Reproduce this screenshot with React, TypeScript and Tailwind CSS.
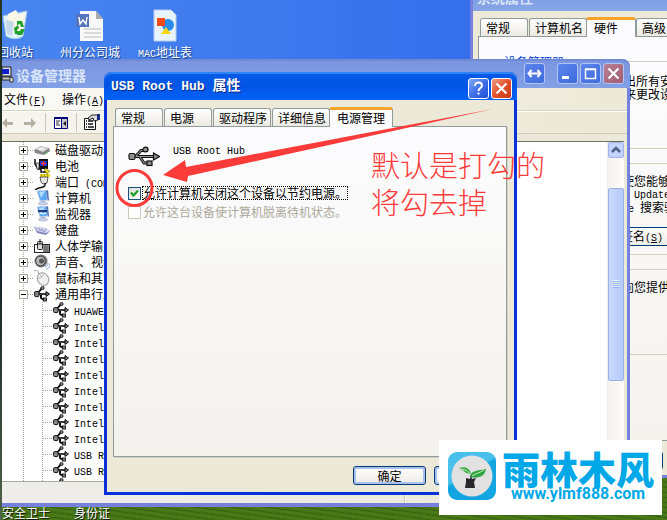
import { useState } from "react";
import type { ReactNode } from "react";
import clsx from "clsx";

type TabsProps = {
  items: string[];
  active: string;
};

type DeviceKind =
  | "disk"
  | "battery"
  | "port"
  | "computer"
  | "monitor"
  | "keyboard"
  | "hid"
  | "sound"
  | "mouse"
  | "usb";

const devices: { kind: DeviceKind; label: string }[] = [
  { kind: "disk", label: "磁盘驱动器" },
  { kind: "battery", label: "电池" },
  { kind: "port", label: "端口" },
  { kind: "computer", label: "计算机" },
  { kind: "monitor", label: "监视器" },
  { kind: "keyboard", label: "键盘" },
  { kind: "hid", label: "人体学输入设备" },
  { kind: "sound", label: "声音、视频" },
  { kind: "mouse", label: "鼠标和其它" },
  { kind: "usb", label: "通用串行总线" },
];

const usbDevices = [
  "HUAWEI",
  "Intel(R)",
  "Intel(R)",
  "Intel(R)",
  "Intel(R)",
  "Intel(R)",
  "Intel(R)",
  "Intel(R)",
  "Intel(R)",
  "USB Root",
  "USB Root",
  "USB Root",
];

// latin letters are half the width of a chinese one: 10px mono next to 12px hanzi
const Latin = ({ children }: { children: ReactNode }) => (
  <span className="font-['Liberation_Mono',monospace] text-[10px] leading-none">
    {children}
  </span>
);

const UsbLarge = () => (
  <svg width="32" height="26" viewBox="0 0 32 26">
    <g fill="none" stroke="#111" strokeWidth="3">
      <path d="M6 13.5h20M8 13l5-5.500h4M12 14l4 6h4" />
    </g>
    <g fill="none" stroke="#999" strokeWidth="1.1">
      <path d="M6 13.5h20M8 13l5-5.500h4M12 14l4 6h4" />
    </g>
    <g fill="#8f8f8f" stroke="#111" strokeWidth="1.2">
      <rect x="1" y="10.500" width="6" height="6" rx="1.5" />
      <path d="M25.500 10l6 3.500-6 3.500z" />
      <ellipse cx="17.500" cy="6.500" rx="2.600" ry="2.300" />
      <rect x="19" y="18" width="5" height="4.500" />
    </g>
  </svg>
);

const DeviceIcon = ({ kind }: { kind: DeviceKind }) => (
  <svg width="16" height="16" viewBox="0 0 16 16" className="shrink-0">
    {kind === "disk" && (
      <>
        <path d="M0 8l6-4 9 2 1 3-6 4-9-2z" fill="#858585" />
        <path d="M1 7l5-3 9 2-6 4z" fill="#d8d8d8" />
        <path d="M4 7l3-1 4 1-3 1z" fill="#f8f8f8" />
        <path d="M11 11h2" stroke="#39b54a" />
      </>
    )}
    {kind === "battery" && (
      <>
        <path d="M1 1v5l3 5h3v3h6" fill="none" stroke="#111" strokeWidth="1.5" />
        <rect x="5" y="1" width="9" height="10" fill="#111" />
        <rect x="6" y="3" width="7" height="5" fill="#1230e0" />
        <path d="M9.500 3v5M7 5.500h5" stroke="#f33" strokeWidth="1.300" />
        <path d="M2 5h3v6H3z" fill="#ddd" stroke="#111" strokeWidth=".6" />
        <path d="M10 12l2-2 1 2 3 1-3 3-1-2z" fill="#f3dc20" stroke="#665800" strokeWidth=".5" />
      </>
    )}
    {kind === "port" && (
      <>
        <path d="M6 0h10v3H6z" fill="#f1dc24" />
        <path d="M7 1h1m2 0h1m2 0h1" stroke="#665800" />
        <path d="M6 3h8l-1 6-4 1-2-2z" fill="#e6e6e6" stroke="#333" strokeWidth=".8" />
        <path d="M11 9c1 6-5 3-10 7" fill="none" stroke="#111" strokeWidth="1.400" />
      </>
    )}
    {(kind === "computer" || kind === "monitor") && (
      <>
        <path d="M3 1l9-1 2 10-8 1z" fill="#5aa9f5" stroke="#c3cfe4" />
        <path d="M5 2l6-1-4 7z" fill="#b4dcff" />
        <path d="M12 1l2-1 1 10-1 1z" fill="#5271b5" />
        <path d="M7 11h4v2H7z" fill="#8ca0c8" />
        <ellipse cx="9" cy="13.500" rx="5" ry="2" fill="#c2cbe1" />
        {kind === "monitor" && (
          <>
            <path d="M4 4h9v2H4z" fill="#213b7a" />
            <path d="M6 7l3 1 3-1" stroke="#fff" fill="none" />
          </>
        )}
      </>
    )}
    {kind === "keyboard" && (
      <>
        <path d="M0 5l11 1 5 3-4 4-9-2z" fill="#8585b8" />
        <path d="M0 4l10 2 6 3-4 2-9-2z" fill="#dedef4" />
        <path d="M2 6l10 3M4 8l8 2M6 5l-2 3m5-2L7 9m5-2l-2 3" stroke="#9a9acb" strokeWidth=".7" />
      </>
    )}
    {kind === "hid" && (
      <>
        <rect x=".5" y="6.500" width="15" height="8" fill="#fff" stroke="#222" />
        <rect x="9" y="7" width="6" height="7" fill="#aaa" />
        <path d="M9 9h6m-6 2h6m-6 2h6M11 7v7m2-7v7" stroke="#444" strokeWidth=".6" />
        <rect x="3.500" y="3.500" width="5" height="8" rx="1" fill="#ddd" stroke="#222" />
        <path d="M6 1v5M4 6h4" stroke="#222" />
      </>
    )}
    {kind === "sound" && (
      <>
        <circle cx="7" cy="7" r="6.500" fill="#777" />
        <circle cx="6.500" cy="7" r="4.800" fill="#b9b9b9" stroke="#444" />
        <circle cx="7.500" cy="7" r="2.500" fill="#555" />
        <path d="M11 13c2 0 3-2 3-4M12 15.500c3-1 4-3 4-6" fill="none" stroke="#8fa2e2" />
      </>
    )}
    {kind === "mouse" && (
      <>
        <path d="M0 1c4-2 4 1 5 3" fill="none" stroke="#999" />
        <ellipse cx="9" cy="9" rx="5.500" ry="6.500" transform="rotate(-28 9 9)" fill="#f0f0f0" stroke="#9a9a9a" />
        <path d="M3 8c3 1 6-1 7-5M6 5l2 2" fill="none" stroke="#aaa" />
      </>
    )}
    {kind === "usb" && (
      <>
        <path d="M3 8h9M4 7l4-5M7 8v4l3 2" fill="none" stroke="#111" strokeWidth="2" />
        <path d="M3 8h10" stroke="#888" strokeWidth=".7" />
        <rect x=".6" y="5.600" width="4.400" height="5" rx="1" fill="#888" stroke="#111" />
        <path d="M12 5.500l3.500 2.500-3.500 2.500z" fill="#777" stroke="#111" />
        <circle cx="8.500" cy="2" r="1.600" fill="#888" stroke="#111" strokeWidth=".9" />
        <rect x="9.500" y="12" width="3" height="3" fill="#888" stroke="#111" strokeWidth=".9" />
      </>
    )}
  </svg>
);

const Tabs = ({ items, active }: TabsProps) => (
  <div role="tablist" className="relative z-10 flex h-5 items-end gap-px pl-0.5">
    {items.map((item) => (
      <button
        key={item}
        role="tab"
        aria-selected={item === active}
        className={clsx(
          "shrink-0 rounded-t-[3px] border border-b-0 border-[#919b9c] text-left leading-4",
          item === active
            ? "-ml-0.5 -mr-px h-5 min-w-[50px] border-t-[3px] border-t-[#f5a52a] bg-[#fcfcfe] px-[7px] pb-1"
            : "mb-px h-[18px] min-w-12 bg-linear-to-b from-white to-[#ebeae2] pr-[3px] pl-[5px]",
        )}
      >
        {item}
      </button>
    ))}
  </div>
);

type CaptionProps = {
  kind: "help" | "close" | "min" | "max" | "move";
  faded?: boolean;
};

const captionNames = {
  help: "帮助",
  close: "关闭",
  min: "最小化",
  max: "最大化",
  move: "移动",
};

const CaptionButton = ({ kind, faded }: CaptionProps) => (
  <button
    aria-label={captionNames[kind]}
    className={clsx(
      "size-[21px] rounded-[3px] border",
      faded ? "border-[#b4c4f0]" : "border-white",
      kind === "close"
        ? faded
          ? "bg-linear-to-br from-[#b87f93] to-[#a25c70]"
          : "bg-linear-to-br from-[#f0987c] via-[#e2512a] to-[#c63a12]"
        : faded
          ? "bg-linear-to-br from-[#5c85ea] to-[#3f6ade]"
          : "bg-linear-to-br from-[#86a9f6] via-[#3f70e8] to-[#1e50d4]",
    )}
  >
    <svg width="19" height="19" viewBox="0 0 19 19" fill="none" stroke="#fff" strokeWidth="2">
      {kind === "close" && <path d="M4.500 4.500l10 10M14.500 4.500l-10 10" strokeWidth="2.200" />}
      {kind === "min" && <path d="M4 13.500h7" strokeWidth="3" />}
      {kind === "max" && <path d="M4.500 5.500h10v9h-10zM4 5h11" strokeWidth="1.500" />}
      {kind === "move" && <path d="M4 9.500h11M6.500 6L3.500 9.500l3 3.500M12.500 6l3 3.500-3 3.500" />}
      {kind === "help" && (
        <>
          <path d="M6 7c0-5 7-4 7-.500 0 2.500-3.500 2.500-3.500 5.500" />
          <path d="M8.500 14.500h2" />
        </>
      )}
    </svg>
  </button>
);

const DialogButton = ({ children }: { children: ReactNode }) => (
  <button className="h-[19px] w-[73px] rounded-[3px] border border-[#003c74] bg-linear-to-b from-white to-[#ecebe5] leading-4 shadow-[inset_0_0_0_2px_#a9c1f0]">
    {children}
  </button>
);

const SystemProperties = () => (
  <section className="absolute -top-[19px] left-[468px] flex h-[497px] w-60 flex-col rounded-t-lg border-x-[3px] border-b-[3px] border-[#7581dd] bg-[#ece9d8]">
    <h2 className="h-[30px] shrink-0 rounded-t bg-linear-to-b from-[#7a96df] to-[#86a5e8] pl-1 pt-2 text-sm leading-4 font-bold text-[#d8e4f8]">
      系统属性
    </h2>
    <div className="flex grow flex-col pt-1.5 pl-[5px]">
      <Tabs items={["常规", "计算机名", "硬件", "高级"]} active="硬件" />
      <div className="-mt-px h-[405px] border border-[#919b9c] bg-linear-to-b from-[#fcfcfe] to-[#f4f3ee] pt-[18px] pb-4 pl-3">
        <fieldset className="h-[94px] border border-[#d0d0bf] pl-9 leading-[13px]">
          <legend className="-ml-7 px-1 text-[#0046d5]">设备管理器</legend>
          <p className="mt-1.5 whitespace-nowrap">
            设备管理器为您列出所有安装
            <br />
            请使用设备管理器来更改设备
          </p>
        </fieldset>
        <fieldset className="mt-2 h-[98px] border border-[#d0d0bf] pl-[58px] leading-[12px]">
          <legend className="-ml-12 px-1 text-[#0046d5]">驱动程序</legend>
          <p className="mt-1.5 whitespace-nowrap">
            驱动程序签名使您能够确定
            <br />
            容的。<Latin>Windows Update</Latin>
            <br />
            <Latin>Windows Update </Latin>搜索驱动
          </p>
          <button className="mt-3 h-[19px] w-[136px] rounded-[3px] border border-[#003c74] bg-linear-to-b from-white to-[#ecebe5] whitespace-nowrap">
            驱动程序签名
            <Latin>
              (<u>S</u>)
            </Latin>
          </button>
        </fieldset>
        <fieldset className="mt-2 h-[92px] border border-[#d0d0bf] pl-[58px] leading-[13px]">
          <legend className="-ml-12 px-1 text-[#0046d5]">硬件配置文件</legend>
          <p className="mt-1 whitespace-nowrap">硬件配置文件向您提供建立</p>
        </fieldset>
      </div>
      <div className="flex gap-2 pt-2.5 pl-[112px]">
        <DialogButton>确定</DialogButton>
      </div>
    </div>
  </section>
);

const DeviceTree = () => (
  <ul className="grow overflow-hidden pl-[17px]">
    {devices.map(({ kind, label }) => (
      <li key={label} className="flex h-4 items-center whitespace-nowrap">
        <svg width="15" height="16" viewBox="0 0 15 16" className="shrink-0">
          <path d="M4.500 0v16M9 8.500h6" stroke="#aca899" strokeDasharray="1 1" />
          <rect x=".5" y="4.500" width="8" height="8" fill="#fff" stroke="#aca899" />
          <path d={kind === "usb" ? "M2 8.500h5" : "M2 8.500h5M4.500 6v5"} stroke="#000" />
        </svg>
        <DeviceIcon kind={kind} />
        <span className="pl-[5px] leading-4">
          {label}
          {kind === "port" && <Latin> (COM)</Latin>}
        </span>
      </li>
    ))}
    {usbDevices.map((name, i) => (
      <li key={i} className="flex h-4 items-center whitespace-nowrap">
        <svg width="34" height="16" viewBox="0 0 34 16" className="shrink-0">
          <path d="M4.500 0v16M23.500 0v16M24 8.500h10" stroke="#aca899" strokeDasharray="1 1" />
        </svg>
        <DeviceIcon kind="usb" />
        <span className="pl-[5px] leading-4">
          <Latin>{name}</Latin>
        </span>
      </li>
    ))}
  </ul>
);

const ScrollBar = () => (
  <div className="flex w-[17px] shrink-0 flex-col border-l border-[#eeede5] bg-linear-to-r from-[#f3f1ec] to-[#fefefb]">
    <button aria-label="向上" className="h-4 rounded-xs border border-[#9db4e8] bg-[#c3d3fd]">
      <svg width="14" height="14" viewBox="0 0 14 14" className="mx-auto">
        <path d="M3 9l4-4 4 4" fill="none" stroke="#4d6185" strokeWidth="2.500" />
      </svg>
    </button>
    <div className="mt-[30px] flex h-[193px] flex-col items-center justify-center gap-px rounded-xs border border-[#98b1e4] bg-linear-to-r from-[#c9d8fe] to-[#b6cbfa]">
      <i className="h-px w-1.5 bg-[#8cb0f8] shadow-[0_-1px_#eef4fe]" />
      <i className="h-px w-1.5 bg-[#8cb0f8] shadow-[0_-1px_#eef4fe]" />
      <i className="h-px w-1.5 bg-[#8cb0f8] shadow-[0_-1px_#eef4fe]" />
      <i className="h-px w-1.5 bg-[#8cb0f8] shadow-[0_-1px_#eef4fe]" />
    </div>
  </div>
);

const DeviceManager = () => (
  <section className="absolute top-[59px] -left-[3px] flex h-[448px] w-[631px] flex-col rounded-t-lg border-x-[3px] border-b-4 border-[#7581dd] bg-[#ece9d8]">
    <header className="-mx-[3px] flex h-[29px] shrink-0 items-center rounded-t-lg border-t-2 border-[#7289d4] bg-linear-to-b from-[#7b96e0] to-[#82a0e6] px-[3px] text-[#d8e4f8]">
      <svg width="12" height="18" viewBox="0 0 12 18">
        <path d="M0 1h9v9H0z" fill="#ddd" stroke="#222" />
        <path d="M0 3h7v5H0z" fill="#1020c8" />
        <path d="M0 11h10v3H0z" fill="#ccc" stroke="#222" />
        <path d="M8 11l3 1v4H8z" fill="#eee" stroke="#333" />
      </svg>
      <h2 className="grow pl-0.5 text-sm font-bold">设备管理器</h2>
      <div className="flex gap-0.5 pr-[3px]">
        <div className="mr-2.5">
          <CaptionButton kind="move" faded />
        </div>
        <CaptionButton kind="min" faded />
        <CaptionButton kind="max" faded />
        <CaptionButton kind="close" faded />
      </div>
    </header>
    <nav className="flex h-[23px] shrink-0 items-center gap-4 border-b border-[#d8d2bd] bg-linear-to-r from-[#fafaf7] to-[#ece9d8] pl-0.5">
      <button>
        文件
        <Latin>
          (<u>F</u>)
        </Latin>
      </button>
      <button>
        操作
        <Latin>
          (<u>A</u>)
        </Latin>
      </button>
    </nav>
    <div className="flex h-[23px] shrink-0 items-center border-t border-b border-t-white border-b-[#d0ccb8] bg-linear-to-r from-[#f6f5f0] to-[#ebe8d6]">
      <svg width="43" height="16" viewBox="0 0 43 16" fill="#b3b0a2">
        <path d="M0 8l5-5v4h6v3H5v3zM34 8l-5-5v4h-7v3h7v3z" />
      </svg>
      <i className="h-[19px] w-px bg-[#c9c6b7]" />
      <svg width="14" height="12" viewBox="0 0 14 12" className="ml-2">
        <path d="M.5 .5h13v11H.5z" fill="#fff" stroke="#00007a" />
        <path d="M0 0h14v2H0zM7 0h1v12H7z" fill="#00007a" />
        <path d="M8 2h5v9H8z" fill="#c8c8c8" />
        <path d="M2 4h4M2 6h3M2 8h4" stroke="#333" />
        <path d="M12 4v5L9 6.500z" fill="#111" />
      </svg>
      <i className="ml-2 h-[19px] w-px bg-[#c9c6b7]" />
      <svg width="17" height="17" viewBox="0 0 17 17" className="ml-[7px]">
        <path d="M.5 4.500h11v11H.5z" fill="#fff" stroke="#111" />
        <path d="M2 7h1m1 0h5M2 10h1m1 0h5M2 13h1m1 0h6" stroke="#111" strokeWidth="1.300" />
        <path d="M4 4l4-3h6v5l-4 1-1-3-4 2z" fill="#ddd" stroke="#222" />
        <path d="M13 0h3v6h-3z" fill="#1b2a80" />
      </svg>
    </div>
    <div className="mt-[7px] mr-[3px] flex min-h-0 grow border-t border-t-[#716f64] bg-white">
      <DeviceTree />
      <ScrollBar />
    </div>
    <footer className="flex h-[22px] shrink-0 border-t border-[#aca899] bg-linear-to-r from-[#eeedea] to-[#ebe8d7] pt-1">
      <span className="w-[403px] border-r border-[#c5c2b0]" />
      <span className="grow border-l border-white" />
    </footer>
  </section>
);

const HubProperties = () => {
  const [saving, setSaving] = useState<boolean>(true);

  return (
    <section
      role="dialog"
      aria-labelledby="hub-title"
      className="absolute top-[72px] left-[102px] flex h-[423px] w-[413px] flex-col rounded-t-lg border-x-[3px] border-b-[3px] border-[#0831d9] bg-[#ece9d8]"
    >
      <header className="-mx-[3px] flex h-7 shrink-0 items-center rounded-t-lg bg-linear-to-b from-[#0a5ce8] via-[#0055e5] to-[#0262f8] pr-[5px] pl-[7px] text-white shadow-[inset_0_2px_#2f85f5]">
        <h1
          id="hub-title"
          className="grow font-['Liberation_Mono','Noto_Sans_CJK_SC',monospace] text-[13px] font-bold [text-shadow:1px_1px_#0a2a80]"
        >
          USB Root Hub <span className="text-sm">属性</span>
        </h1>
        <div className="flex gap-0.5 pt-1">
          <CaptionButton kind="help" />
          <CaptionButton kind="close" />
        </div>
      </header>
      <div className="flex grow flex-col pt-[7px] pr-[7px] pl-1.5">
        <Tabs
          items={["常规", "电源", "驱动程序", "详细信息", "电源管理"]}
          active="电源管理"
        />
        <div className="-mt-px grow border border-[#919b9c] bg-linear-to-b from-[#fcfcfe] to-[#f3f2ed] pt-4 pl-3.5 shadow-[1px_1px_#d5d2c3]">
          <div className="flex gap-[13px]">
            <UsbLarge />
            <p className="leading-[12px]">
              <Latin>USB Root Hub</Latin>
            </p>
          </div>
          <div className="mt-[17px] flex h-[14px] items-center">
            <input
              id="save"
              type="checkbox"
              checked={saving}
              onChange={() => setSaving(!saving)}
              className="peer size-[13px] appearance-none border border-[#1c5180] bg-linear-to-br from-[#dcdcd7] to-white"
            />
            <svg width="9" height="9" viewBox="0 0 9 9" className="pointer-events-none invisible -ml-[11px] peer-checked:visible">
              <path d="M1 3.500l2.500 3L8 1.500" fill="none" stroke="#21a121" strokeWidth="2.200" />
            </svg>
            <label
              htmlFor="save"
              className="ml-[3px] border border-dotted border-black leading-[12px]"
            >
              允许计算机关闭这个设备以节约电源。
            </label>
          </div>
          <div className="mt-[5px] flex h-[14px] items-center gap-0.5 text-[#aca899]">
            <input
              id="wake"
              type="checkbox"
              disabled
              className="size-[13px] appearance-none border border-[#cac8bb] bg-white"
            />
            <label htmlFor="wake" className="leading-[12px]">
              允许这台设备使计算机脱离待机状态。
            </label>
          </div>
        </div>
        <footer className="flex h-[35px] shrink-0 justify-end gap-2 pt-[9px]">
          <DialogButton>确定</DialogButton>
          <DialogButton>取消</DialogButton>
        </footer>
      </div>
    </section>
  );
};

const Annotation = () => (
  <>
    <svg
      width="400"
      height="120"
      viewBox="0 0 400 120"
      className="pointer-events-none absolute top-[100px] left-[98px]"
    >
      <circle cx="34.500" cy="88" r="17.500" fill="none" stroke="#fb3b3a" strokeWidth="3" />
      <path d="M63 75L85 60l1 7L393 9 88 76l-1 6z" fill="#fb3b3a" />
    </svg>
    <p className="absolute top-[146px] left-[369px] text-[29px] leading-[37px] font-light whitespace-nowrap text-[#fb3b3a]">
      默认是打勾的
      <br />
      将勾去掉
    </p>
  </>
);

const Watermark = () => (
  <aside className="absolute top-[440px] left-[437px] flex h-[75px] w-[223px] gap-1.5 bg-white pt-3 pl-[9px] text-[#00a8e8]">
    <svg width="48" height="48" viewBox="0 0 48 48">
      <defs>
        <linearGradient id="tile" x2=".6" y2="1">
          <stop offset=".5" stopColor="#49bfec" />
          <stop offset=".55" stopColor="#12a5e0" />
        </linearGradient>
      </defs>
      <rect width="48" height="48" rx="9" fill="url(#tile)" />
      <circle cx="24" cy="24" r="20.500" fill="#e1e1e1" />
      <path d="M11 16c6-2 11 0 12 6-6 0-7-4-12-6z" fill="#3cae49" />
      <path d="M22 25c1-7 7-6 16-8-1 7-7 10-16 8z" fill="#2fa540" />
      <path d="M14 17c4 1 6 2 8 5M24 24c4-3 8-3 12-6" stroke="#bfe6b8" fill="none" />
      <path d="M18 26l4 1 1-4 1 4 4-1-2 4 1 6H17l1-6z" fill="#26262b" />
    </svg>
    <div className="flex flex-col items-center">
      <strong className="text-[38px] leading-8 font-black">雨林木风</strong>
      <a
        href="#ylmf"
        className="mt-0.5 font-['Roboto',sans-serif] text-base leading-4 font-bold"
      >
        www.ylmf888.com
      </a>
    </div>
  </aside>
);

const Shortcuts = () => (
  <div className="absolute top-2 -left-1.5 flex text-white [text-shadow:1px_1px_1px_#123a80]">
    <a href="#bin" className="flex w-[38px] flex-col items-center">
      <svg width="32" height="34" viewBox="0 0 32 34">
        <path d="M4 8l24-5-4 25c-4 4-13 3-17 0z" fill="#dff3f8" stroke="#9ecbe2" />
        <path d="M9 6l8-4 3 5 7-3-4 20-14 2z" fill="#f8f7e8" />
        <path d="M7 12l8 2-2 14-5-2z" fill="#c6d8ea" />
        <path d="M18 13l5 0 2 6-3 0-1-3-3 1zM15 20l4-3 1 3-2 2 1 4-3 0zM18 23l3 0 1-2 4 0-3 6-5 0z" fill="#22a12c" />
      </svg>
      <span className="mt-0.5 leading-4">回收站</span>
    </a>
    <a href="#doc" className="ml-3 flex w-[88px] flex-col items-center">
      <svg width="28" height="34" viewBox="0 0 28 34">
        <path d="M4 3h16l7 8v22H4z" fill="#f8f8f8" />
        <path d="M20 3l7 8h-7z" fill="#aaa" />
        <path d="M8 21h17M8 25h17M8 29h17" stroke="#bbb" />
        <path d="M0 6h13v13H0z" fill="#5574bd" />
        <path d="M3 9l1 7 3-4 3 4 1-7" fill="none" stroke="#fff" strokeWidth="1.400" />
      </svg>
      <span className="mt-0.5 leading-4">州分公司城</span>
    </a>
    <a href="#mac" className="flex w-[62px] flex-col items-center">
      <svg width="26" height="34" viewBox="0 0 26 34">
        <path d="M2 2h17l5 5v26H2z" fill="#e8f3ff" stroke="#b7cce8" />
        <circle cx="16" cy="17" r="6" fill="#288ce8" />
        <path d="M5 10h8v8H5z" fill="#f34a18" />
        <path d="M14 19l5 7H9z" fill="#f5d515" />
      </svg>
      <span className="mt-0.5 leading-4 whitespace-nowrap">
        <Latin>MAC</Latin>地址表
      </span>
    </a>
  </div>
);

const App = () => (
  <main className="flex h-screen overflow-hidden font-['Noto_Sans_CJK_SC',sans-serif] text-xs text-black">
    <div className="w-0.5 shrink-0 bg-linear-to-b from-[#27361c] via-[#142026] to-[#4f6448]" />
    <div className="relative grow overflow-hidden bg-linear-to-r from-[#4985f0] to-[#2d65e9]">
      <div className="absolute inset-x-0 top-[470px] bottom-0 bg-[repeating-linear-gradient(8deg,#416f13_0px,#4d7d18_3px,#36600f_5px)]" />
      <Shortcuts />
      <SystemProperties />
      <DeviceManager />
      <HubProperties />
      <Annotation />
      <div className="absolute top-[506px] left-0 flex gap-6 leading-[14px] text-white [text-shadow:1px_1px_1px_#000]">
        <span>安全卫士</span>
        <span>身份证</span>
      </div>
      <Watermark />
    </div>
  </main>
);

export default App;
